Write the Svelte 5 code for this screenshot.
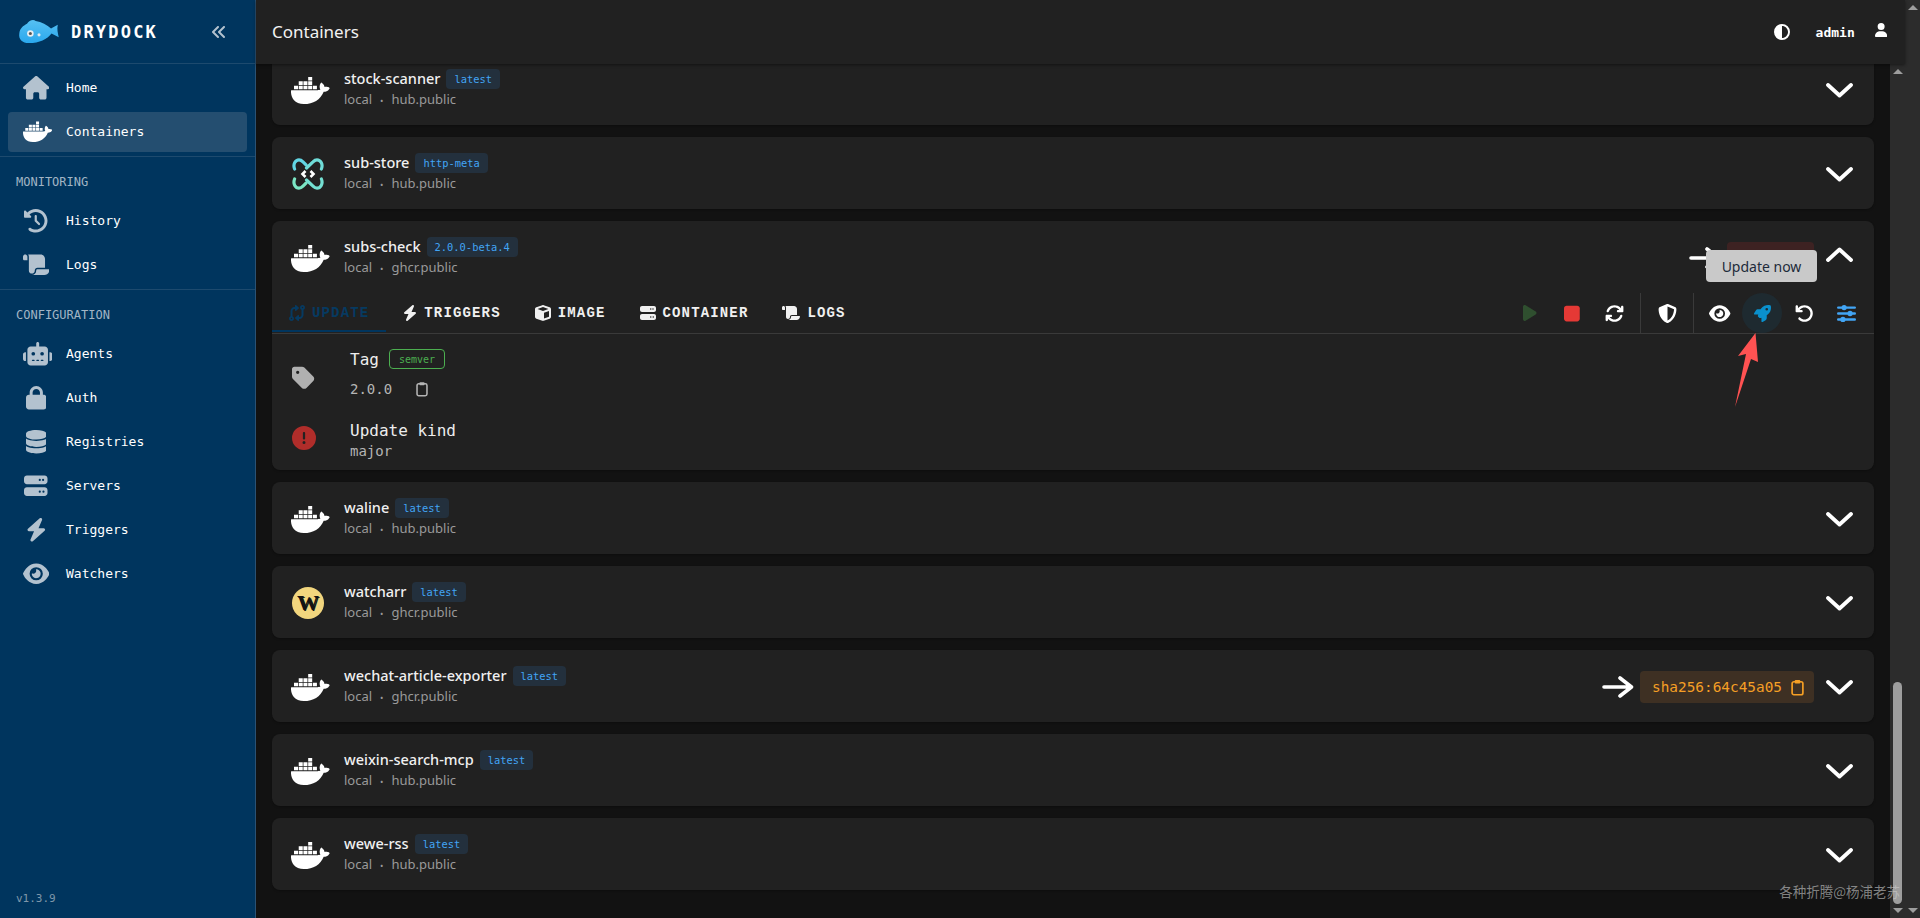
<script>
  const icons = {
    house: [576, 'M575.8 255.5c0 18-15 32.1-32 32.1h-32l.7 160.2c0 2.7-.2 5.4-.5 8.1V472c0 22.1-17.9 40-40 40H456c-1.1 0-2.2 0-3.3-.1c-1.4 .1-2.8 .1-4.2 .1H416 392c-22.1 0-40-17.9-40-40V448 384c0-17.7-14.3-32-32-32H256c-17.7 0-32 14.3-32 32v64 24c0 22.1-17.9 40-40 40H160 128.1c-1.5 0-3-.1-4.5-.2c-1.2 .1-2.4 .2-3.6 .2H104c-22.1 0-40-17.9-40-40V360c0-.9 0-1.9 .1-2.8V287.6H32c-18 0-32-14-32-32.1c0-9 3-17 10-24L266.4 8c7-7 15-8 22-8s15 2 21 7L564.8 231.5c8 7 12 15 11 24z'],
    docker: [640, 'M349.9 236.3h-66.1v-59.4h66.1v59.4zm0-204.3h-66.1v60.7h66.1V32zm78.2 144.8H362v59.4h66.1v-59.4zm-156.3-72.1h-66.1v60.1h66.1v-60.1zm78.1 0h-66.1v60.1h66.1v-60.1zm276.8 100c-14.4-9.7-47.6-13.2-73.1-8.4-3.3-24-16.7-44.9-41.1-63.7l-14-9.3-9.3 14c-18.4 27.8-23.4 73.6-3.7 103.8-8.7 4.7-25.8 11.1-48.4 10.7H2.4c-8.7 50.8 5.8 116.8 44 162.1 37.1 43.9 92.7 66.2 165.4 66.2 157.4 0 273.9-72.5 328.4-204.2 21.4.4 67.6.1 91.3-45.2 1.5-2.5 6.6-13.2 8.5-17.1l-13.3-8.9zm-511.1-27.9h-66v59.4h66.1v-59.4zm78.1 0h-66.1v59.4h66.1v-59.4zm78.1 0h-66.1v59.4h66.1v-59.4zm-78.1-72.1h-66.1v60.1h66.1v-60.1z'],
    history: [512, 'M75 75L41 41C25.9 25.9 0 36.6 0 57.9V168c0 13.3 10.7 24 24 24H134.1c21.4 0 32.1-25.9 17-41l-30.8-30.8C155 85.5 203 64 256 64c106 0 192 86 192 192s-86 192-192 192c-40.8 0-78.6-12.7-109.7-34.4c-14.5-10.1-34.4-6.6-44.6 7.9s-6.6 34.4 7.9 44.6C151.2 495 201.7 512 256 512c141.4 0 256-114.6 256-256S397.4 0 256 0C185.3 0 121.3 28.7 75 75zm181 53c-13.3 0-24 10.7-24 24V256c0 6.4 2.5 12.5 7 17l72 72c9.4 9.4 24.6 9.4 33.9 0s9.4-24.6 0-33.9l-65-65V152c0-13.3-10.7-24-24-24z'],
    scroll: [576, 'M0 80v48c0 17.7 14.3 32 32 32H48 96V80c0-26.5-21.5-48-48-48S0 53.5 0 80zM112 32c10 13.4 16 30 16 48V384c0 35.3 28.7 64 64 64s64-28.7 64-64v-5.3c0-32.4 26.3-58.7 58.7-58.7H480V128c0-53-43-96-96-96H112zM464 480c61.9 0 112-50.1 112-112c0-8.8-7.2-16-16-16H314.7c-14.7 0-26.7 11.9-26.7 26.7V384c0 53-43 96-96 96H368h96z'],
    robot: [640, 'M320 0c17.7 0 32 14.3 32 32V96H472c39.8 0 72 32.2 72 72V440c0 39.8-32.2 72-72 72H168c-39.8 0-72-32.2-72-72V168c0-39.8 32.2-72 72-72H288V32c0-17.7 14.3-32 32-32zM208 384c-8.8 0-16 7.2-16 16s7.2 16 16 16h32c8.8 0 16-7.2 16-16s-7.2-16-16-16H208zm96 0c-8.8 0-16 7.2-16 16s7.2 16 16 16h32c8.8 0 16-7.2 16-16s-7.2-16-16-16H304zm96 0c-8.8 0-16 7.2-16 16s7.2 16 16 16h32c8.8 0 16-7.2 16-16s-7.2-16-16-16H400zM264 256a40 40 0 1 0 -80 0 40 40 0 1 0 80 0zm152 40a40 40 0 1 0 0-80 40 40 0 1 0 0 80zM48 224H64V416H48c-26.5 0-48-21.5-48-48V272c0-26.5 21.5-48 48-48zm544 0c26.5 0 48 21.5 48 48v96c0 26.5-21.5 48-48 48H576V224h16z'],
    lock: [448, 'M144 144v48H304V144c0-44.2-35.8-80-80-80s-80 35.8-80 80zM80 192V144C80 64.5 144.5 0 224 0s144 64.5 144 144v48h16c35.3 0 64 28.7 64 64V448c0 35.3-28.7 64-64 64H64c-35.3 0-64-28.7-64-64V256c0-35.3 28.7-64 64-64H80z'],
    database: [448, 'M448 80v48c0 44.2-100.3 80-224 80S0 172.2 0 128V80C0 35.8 100.3 0 224 0S448 35.8 448 80zM393.2 214.7c20.8-7.4 39.9-16.9 54.8-28.6V288c0 44.2-100.3 80-224 80S0 332.2 0 288V186.1c14.9 11.8 34 21.2 54.8 28.6C99.7 230.7 159.5 240 224 240s124.3-9.3 169.2-25.3zM0 346.1c14.9 11.8 34 21.2 54.8 28.6C99.7 390.7 159.5 400 224 400s124.3-9.3 169.2-25.3c20.8-7.4 39.9-16.9 54.8-28.6V432c0 44.2-100.3 80-224 80S0 476.2 0 432V346.1z'],
    server: [512, 'M64 32C28.7 32 0 60.7 0 96v64c0 35.3 28.7 64 64 64H448c35.3 0 64-28.7 64-64V96c0-35.3-28.7-64-64-64H64zm280 72a24 24 0 1 1 0 48 24 24 0 1 1 0-48zm48 24a24 24 0 1 1 48 0 24 24 0 1 1 -48 0zM64 288c-35.3 0-64 28.7-64 64v64c0 35.3 28.7 64 64 64H448c35.3 0 64-28.7 64-64V352c0-35.3-28.7-64-64-64H64zm280 72a24 24 0 1 1 0 48 24 24 0 1 1 0-48zm56 24a24 24 0 1 1 48 0 24 24 0 1 1 -48 0z'],
    bolt: [448, 'M349.4 44.6c5.9-13.7 1.5-29.7-10.6-38.5s-28.6-8-39.9 1.8l-256 224c-10 8.8-13.6 22.9-8.9 35.3S50.7 288 64 288H175.5L98.6 467.4c-5.9 13.7-1.5 29.7 10.6 38.5s28.6 8 39.9-1.8l256-224c10-8.8 13.6-22.9 8.9-35.3s-16.6-20.7-30-20.7H272.5L349.4 44.6z'],
    eye: [576, 'M288 32c-80.8 0-145.5 36.8-192.6 80.6C48.6 156 17.3 208 2.5 243.7c-3.3 7.9-3.3 16.7 0 24.6C17.3 304 48.6 356 95.4 399.4C142.5 443.2 207.2 480 288 480s145.5-36.8 192.6-80.6c46.8-43.5 78.1-95.4 93-131.1c3.3-7.9 3.3-16.7 0-24.6c-14.9-35.7-46.2-87.7-93-131.1C433.5 68.8 368.8 32 288 32zM144 256a144 144 0 1 1 288 0 144 144 0 1 1 -288 0zm144-64c0 35.3-28.7 64-64 64c-7.1 0-13.9-1.2-20.3-3.3c-5.5-1.8-11.9 1.6-11.7 7.4c.3 6.9 1.3 13.8 3.2 20.7c13.7 51.2 66.4 81.6 117.6 67.9s81.6-66.4 67.9-117.6c-11.1-41.5-47.8-69.4-88.6-71.1c-5.8-.2-9.2 6.1-7.4 11.7c2.1 6.4 3.3 13.2 3.3 20.3z'],
    anglesLeft: [448, 'M41.4 233.4c-12.5 12.5-12.5 32.8 0 45.3l160 160c12.5 12.5 32.8 12.5 45.3 0s12.5-32.8 0-45.3L109.3 256 246.6 118.6c12.5-12.5 12.5-32.8 0-45.3s-32.8-12.5-45.3 0l-160 160zm352-160l-160 160c-12.5 12.5-12.5 32.8 0 45.3l160 160c12.5 12.5 32.8 12.5 45.3 0s12.5-32.8 0-45.3L301.3 256 438.6 118.6c12.5-12.5 12.5-32.8 0-45.3s-32.8-12.5-45.3 0z'],
    contrast: [512, 'M448 256c0-106-86-192-192-192V448c106 0 192-86 192-192zM0 256a256 256 0 1 1 512 0A256 256 0 1 1 0 256z'],
    user: [448, 'M224 256A128 128 0 1 0 224 0a128 128 0 1 0 0 256zm-45.7 48C79.8 304 0 383.8 0 482.3C0 498.7 13.3 512 29.7 512H418.3c16.4 0 29.7-13.3 29.7-29.7C448 383.8 368.2 304 269.7 304H178.3z'],
    tag: [448, 'M0 80V229.5c0 17 6.7 33.3 18.7 45.3l176 176c25 25 65.5 25 90.5 0L418.7 317.3c25-25 25-65.5 0-90.5l-176-176c-12-12-28.3-18.7-45.3-18.7H48C21.5 32 0 53.5 0 80zm112 32a32 32 0 1 1 0 64 32 32 0 1 1 0-64z'],
    alert: [512, 'M256 512A256 256 0 1 0 256 0a256 256 0 1 0 0 512zm0-384c13.3 0 24 10.7 24 24V264c0 13.3-10.7 24-24 24s-24-10.7-24-24V152c0-13.3 10.7-24 24-24zM224 352a32 32 0 1 1 64 0 32 32 0 1 1 -64 0z'],
    cube: [512, 'M234.5 5.7c13.9-5 29.1-5 43.1 0l192 68.6C495 83.4 512 107.5 512 134.6V377.4c0 27-17 51.2-42.5 60.3l-192 68.6c-13.9 5-29.1 5-43.1 0l-192-68.6C17 428.6 0 404.5 0 377.4V134.6c0-27 17-51.2 42.5-60.3l192-68.6zM256 66L82.3 128 256 190l173.7-62L256 66zm32 368.6l160-57.1v-188L288 246.6v188z'],
    compare: [512, 'M320 488c0 9.5-5.6 18.1-14.2 21.9s-18.8 2.3-25.8-4.1l-80-72c-5.1-4.6-7.9-11-7.9-17.8s2.9-13.3 7.9-17.8l80-72c7-6.3 17.2-7.9 25.8-4.1s14.2 12.4 14.2 21.9v40h16c35.3 0 64-28.7 64-64V153.3C371.7 141 352 112.8 352 80c0-44.2 35.8-80 80-80s80 35.8 80 80c0 32.8-19.7 61-48 73.3V320c0 70.7-57.3 128-128 128H320v40zM456 80a24 24 0 1 0 -48 0 24 24 0 1 0 48 0zM192 24c0-9.5 5.6-18.1 14.2-21.9s18.8-2.3 25.8 4.1l80 72c5.1 4.6 7.9 11 7.9 17.8s-2.9 13.3-7.9 17.8l-80 72c-7 6.3-17.2 7.9-25.8 4.1s-14.2-12.4-14.2-21.9V128H176c-35.3 0-64 28.7-64 64V358.7c28.3 12.3 48 40.5 48 73.3c0 44.2-35.8 80-80 80s-80-35.8-80-80c0-32.8 19.7-61 48-73.3V192c0-70.7 57.3-128 128-128h16V24zM56 432a24 24 0 1 0 48 0 24 24 0 1 0 -48 0z'],
    play: [384, 'M73 39c-14.8-9.1-33.4-9.4-48.5-.9S0 62.6 0 80V432c0 17.4 9.4 33.4 24.5 41.9s33.7 8.1 48.5-.9L361 297c14.3-8.7 23-24.2 23-41s-8.7-32.2-23-41L73 39z'],
    stop: [384, 'M0 128C0 92.7 28.7 64 64 64H320c35.3 0 64 28.7 64 64V384c0 35.3-28.7 64-64 64H64c-35.3 0-64-28.7-64-64V128z'],
    rotate: [512, 'M105.1 202.6c7.7-21.8 20.2-42.3 37.8-59.8c62.5-62.5 163.8-62.5 226.3 0L386.3 160H352c-17.7 0-32 14.3-32 32s14.3 32 32 32H463.5c0 0 0 0 0 0h.4c17.7 0 32-14.3 32-32V80c0-17.7-14.3-32-32-32s-32 14.3-32 32v35.2L414.4 97.6c-87.5-87.5-229.3-87.5-316.8 0C73.2 122 55.6 150.7 44.8 181.4c-5.9 16.7 2.9 34.9 19.5 40.8s34.9-2.9 40.8-19.5zM39 289.3c-5 1.5-9.8 4.2-13.7 8.2c-4 4-6.7 8.8-8.1 14c-.3 1.2-.6 2.5-.8 3.8c-.3 1.7-.4 3.4-.4 5.1V432c0 17.7 14.3 32 32 32s32-14.3 32-32V396.9l17.6 17.5 0 0c87.5 87.4 229.3 87.4 316.7 0c24.4-24.4 42.1-53.1 52.9-83.7c5.9-16.7-2.9-34.9-19.5-40.8s-34.9 2.9-40.8 19.5c-7.7 21.8-20.2 42.3-37.8 59.8c-62.5 62.5-163.8 62.5-226.3 0l-.1-.1L125.6 352H160c17.7 0 32-14.3 32-32s-14.3-32-32-32H48.4c-1.6 0-3.2 .1-4.8 .3s-3.1 .5-4.6 1z'],
    shield: [512, 'M256 0c4.6 0 9.2 1 13.4 2.9L457.7 82.8c22 9.3 38.4 31 38.3 57.2c-.5 99.2-41.3 280.7-213.6 363.2c-16.7 8-36.1 8-52.8 0C57.3 420.7 16.5 239.2 16 140c-.1-26.2 16.3-47.9 38.3-57.2L242.7 2.9C246.8 1 251.4 0 256 0zm0 66.8V444.8C394 378 431.1 230.1 432 141.4L256 66.8l0 0z'],
    rocket: [512, 'M156.6 384.9L125.7 354c-8.5-8.5-11.5-20.8-7.7-32.2c3-8.9 7-20.5 11.8-33.8L24 288c-8.6 0-16.6-4.6-20.9-12.1s-4.2-16.7 .2-24.1l52.5-88.5c13-21.9 36.5-35.3 61.9-35.3l82.3 0c2.4-4 4.8-7.7 7.2-11.3C289.1-4.1 411.1-8.1 483.9 5.3c11.6 2.1 20.6 11.2 22.8 22.8c13.4 72.9 9.3 194.8-111.4 276.7c-3.5 2.4-7.3 4.8-11.3 7.2v82.3c0 25.4-13.4 49-35.3 61.9l-88.5 52.5c-7.4 4.4-16.6 4.5-24.1 .2s-12.1-12.2-12.1-20.9V380.8c-14.1 4.9-26.4 8.9-35.7 11.9c-11.2 3.6-23.4 .5-31.8-7.8zM384 168a40 40 0 1 0 0-80 40 40 0 1 0 0 80z'],
    undo: [512, 'M125.7 160H176c17.7 0 32 14.3 32 32s-14.3 32-32 32H48c-17.7 0-32-14.3-32-32V64c0-17.7 14.3-32 32-32s32 14.3 32 32v51.2L97.6 97.6c87.5-87.5 229.3-87.5 316.8 0s87.5 229.3 0 316.8s-229.3 87.5-316.8 0c-12.5-12.5-12.5-32.8 0-45.3s32.8-12.5 45.3 0c62.5 62.5 163.8 62.5 226.3 0s62.5-163.8 0-226.3s-163.8-62.5-226.3 0L125.7 160z'],
    sliders: [512, 'M32 64H480a32 32 0 0 1 0 64H32a32 32 0 0 1 0-64zM192 24a72 72 0 1 1 0 144 72 72 0 1 1 0-144zM32 224H480a32 32 0 0 1 0 64H32a32 32 0 0 1 0-64zM352 184a72 72 0 1 1 0 144 72 72 0 1 1 0-144zM32 384H480a32 32 0 0 1 0 64H32a32 32 0 0 1 0-64zM160 344a72 72 0 1 1 0 144 72 72 0 1 1 0-144z']
  };

  const nav = [
    { items: [['house', 'Home'], ['docker', 'Containers', true]] },
    { title: 'MONITORING', items: [['history', 'History'], ['scroll', 'Logs']] },
    {
      title: 'CONFIGURATION',
      items: [['robot', 'Agents'], ['lock', 'Auth'], ['database', 'Registries'], ['server', 'Servers'], ['bolt', 'Triggers'], ['eye', 'Watchers']]
    }
  ];

  const cards = [
    { name: 'stock-scanner', tag: 'latest', reg: 'hub.public' },
    { name: 'sub-store', tag: 'http-meta', reg: 'hub.public', logo: 'store' },
    { name: 'subs-check', tag: '2.0.0-beta.4', reg: 'ghcr.public', open: true, next: '2.0.0', kind: 'danger' },
    { name: 'waline', tag: 'latest', reg: 'hub.public' },
    { name: 'watcharr', tag: 'latest', reg: 'ghcr.public', logo: 'watcharr' },
    { name: 'wechat-article-exporter', tag: 'latest', reg: 'ghcr.public', next: 'sha256:64c45a05', kind: 'warn' },
    { name: 'weixin-search-mcp', tag: 'latest', reg: 'hub.public' },
    { name: 'wewe-rss', tag: 'latest', reg: 'hub.public' }
  ];

  const tabs = [['compare', 'UPDATE'], ['bolt', 'TRIGGERS'], ['cube', 'IMAGE'], ['server', 'CONTAINER'], ['scroll', 'LOGS']];
</script>

{#snippet icon(name, cls = '')}
  <svg class="ic {cls}" viewBox="0 0 {icons[name][0]} 512" fill="currentColor" aria-hidden="true"><path d={icons[name][1]} /></svg>
{/snippet}

{#snippet clip(cls = '')}
  <svg class="clip {cls}" viewBox="0 0 14 18" aria-hidden="true">
    <rect x="1.2" y="2.8" width="11.6" height="14" rx="2" fill="none" stroke="currentColor" stroke-width="1.8" />
    <rect x="4" y="1" width="6" height="3.6" rx="1" fill="currentColor" />
  </svg>
{/snippet}

<div class="app">
  <aside class="sidebar">
    <div class="brand">
      <svg class="fish" viewBox="0 0 44 26" aria-hidden="true">
        <defs>
          <linearGradient id="fishbody" x1="0" y1="0" x2="0" y2="1">
            <stop offset="0" stop-color="#56c0f2" />
            <stop offset="1" stop-color="#2aa8ee" />
          </linearGradient>
        </defs>
        <path d="M9 5 C11 1 16 0 18 2 C24 3 30 6 34 10 L41 6 C40 11 41 14 42 19 L34.5 15 C30 21 22 25 11 25 C4 25 0 21 1 15 C1.5 10 5 7 9 5z" fill="url(#fishbody)" />
        <circle cx="12.5" cy="15" r="3.4" fill="#e8eef2" />
        <circle cx="12.5" cy="15" r="1.6" fill="#555" />
        <circle cx="21.5" cy="16.5" r="1.6" fill="#dfeaf2" />
      </svg>
      <span class="brand-name">DRYDOCK</span>
      <span class="collapse">{@render icon('anglesLeft')}</span>
    </div>

    {#each nav as group}
      <nav class="group">
        {#if group.title}<div class="group-title">{group.title}</div>{/if}
        {#each group.items as [ic, label, active]}
          <div class="nav-item" class:active>
            <span class="nav-ic">{@render icon(ic)}</span>
            <span class="nav-label">{label}</span>
          </div>
        {/each}
      </nav>
    {/each}

    <div class="version">v1.3.9</div>
  </aside>

  <div class="content">
    <header class="topbar">
      <div class="page-title">Containers</div>
      <div class="top-right">
        {@render icon('contrast', 'contrast')}
        <span class="admin">admin</span>
        {@render icon('user', 'user')}
      </div>
    </header>

    <div class="below">
      <main class="scroller">
        <div class="list">
          {#each cards as c}
            <section class="card">
              <div class="card-head">
                <div class="logo">
                  {#if c.logo === 'store'}
                    <svg class="store" viewBox="0 0 32 32" aria-hidden="true">
                      <g fill="none" stroke-width="3.2" stroke-linecap="round">
                        <path d="M2.6 11 C0.6 6 3.6 1.8 7 1.8 C9 1.8 10 2.8 11 3.8 L14 6.8" stroke="#62d6e4" />
                        <path d="M29.4 11 C31.4 6 28.4 1.8 25 1.8 C23 1.8 22 2.8 21 3.8 L14.5 10" stroke="#6fdcd8" />
                        <path d="M2.6 21 C0.6 26 3.6 30.2 7 30.2 C9 30.2 10 29.2 11 28.2 L14 25.2" stroke="#7be6c4" />
                        <path d="M29.4 21 C31.4 26 28.4 30.2 25 30.2 C23 30.2 22 29.2 21 28.2 L14.5 22" stroke="#74e0d2" />
                      </g>
                      <path d="M13.5 13 L10.5 16 L13.5 19 M18.5 13 L21.5 16 L18.5 19" fill="none" stroke="#fff" stroke-width="2.6" />
                    </svg>
                  {:else if c.logo === 'watcharr'}
                    <div class="watcharr">W</div>
                  {:else}
                    {@render icon('docker', 'docker')}
                  {/if}
                </div>
                <div class="meta">
                  <div class="name-row">
                    <span class="name">{c.name}</span>
                    <span class="tag">{c.tag}</span>
                  </div>
                  <div class="sub">local<span class="dot">•</span>{c.reg}</div>
                </div>
                <div class="head-right">
                  {#if c.next}
                    <svg class="arrow" viewBox="0 0 32 22" aria-hidden="true">
                      <path d="M2 11 H29 M18 2 L29.5 11 L18 20" fill="none" stroke="#fff" stroke-width="3.6" stroke-linecap="round" stroke-linejoin="round" />
                    </svg>
                    <span class="next {c.kind}">{c.next}{@render clip()}</span>
                  {/if}
                  <svg class="chev" class:up={c.open} viewBox="0 0 27 15" aria-hidden="true">
                    <path d={c.open ? 'M2 13 L13.5 2.5 L25 13' : 'M2 2 L13.5 12.5 L25 2'} fill="none" stroke="#fff" stroke-width="3.8" stroke-linecap="round" stroke-linejoin="round" />
                  </svg>
                </div>
              </div>

              {#if c.open}
                <div class="toolbar">
                  <div class="tabs">
                    {#each tabs as [ic, label], i}
                      <div class="tab" class:current={i === 0}>{@render icon(ic)}<span>{label}</span></div>
                    {/each}
                  </div>
                  <div class="actions">
                    <span class="act play">{@render icon('play')}</span>
                    <span class="act stop">{@render icon('stop')}</span>
                    <span class="act">{@render icon('rotate')}</span>
                    <span class="sep"></span>
                    <span class="act">{@render icon('shield')}</span>
                    <span class="sep"></span>
                    <span class="act">{@render icon('eye')}</span>
                    <span class="act rocket">{@render icon('rocket')}</span>
                    <span class="act">{@render icon('undo')}</span>
                    <span class="act sliders">{@render icon('sliders')}</span>
                  </div>
                </div>
                <div class="detail">
                  <div class="detail-row">
                    <span class="detail-ic tagic">{@render icon('tag')}</span>
                    <div>
                      <div class="detail-title">Tag<span class="semver">semver</span></div>
                      <div class="detail-value val-gap">2.0.0{@render clip('small')}</div>
                    </div>
                  </div>
                  <div class="detail-row second">
                    <span class="detail-ic alert">{@render icon('alert')}</span>
                    <div>
                      <div class="detail-title">Update kind</div>
                      <div class="detail-value">major</div>
                    </div>
                  </div>
                </div>
                <div class="tooltip">Update now</div>
              {/if}
            </section>
          {/each}
        </div>
      </main>
      <div class="vbar inner">
        <i class="tri up"></i>
        <div class="track"><div class="thumb"></div></div>
        <i class="tri down"></i>
      </div>
    </div>
  </div>

  <div class="vbar outer">
    <i class="tri up"></i>
    <i class="tri down"></i>
  </div>

  <svg class="pointer" viewBox="0 0 30 80" aria-hidden="true">
    <path d="M23.5 1 L26 30 L19 27 L3 75 L14 22 L6 24z" fill="#ff5252" />
  </svg>
  <div class="watermark">各种折腾@杨浦老苏</div>
</div>

<style>
  :global(body) {
    margin: 0;
    background: #121212;
  }

  .app {
    position: relative;
    display: flex;
    height: 918px;
    overflow: hidden;
    font-family: 'DejaVu Sans Mono', 'Liberation Mono', monospace;
    color: #fff;
  }

  .ic {
    display: block;
    height: 1em;
    flex-shrink: 0;
  }

  /* sidebar */
  .sidebar {
    width: 255px;
    flex-shrink: 0;
    display: flex;
    flex-direction: column;
    background: #00355e;
    border-right: 1px solid #2b5274;
  }

  .brand {
    height: 63px;
    display: flex;
    align-items: center;
    padding-left: 18px;
    border-bottom: 1px solid #1d4a6e;
  }

  .fish {
    width: 43px;
    height: 25px;
    margin-right: 10px;
  }

  .brand-name {
    font-size: 17px;
    font-weight: 700;
    letter-spacing: 2.2px;
  }

  .collapse {
    margin-left: 53px;
    font-size: 16px;
    color: #b3c2cf;
  }

  .group {
    display: flex;
    flex-direction: column;
    gap: 4px;
    padding: 4px 8px;
    border-bottom: 1px solid #1d4a6e;
  }

  .group:nth-of-type(3) {
    border-bottom: none;
  }

  .group-title {
    height: 36px;
    box-sizing: border-box;
    padding: 5px 0 0 8px;
    display: flex;
    align-items: center;
    font-size: 12px;
    color: #a2b5c5;
  }

  .nav-item {
    height: 40px;
    display: flex;
    align-items: center;
    gap: 17px;
    padding-left: 15px;
    border-radius: 4px;
    font-size: 13px;
  }

  .nav-label {
    margin-top: -2px;
  }

  .nav-item.active {
    background: #244e70;
  }

  .nav-ic {
    width: 26px;
    display: flex;
    justify-content: safe center;
    font-size: 23.5px;
    color: #b3c2cf;
  }

  .nav-item.active .nav-ic {
    color: #fff;
  }

  .version {
    margin-top: auto;
    padding: 0 0 13px 16px;
    font-size: 11px;
    color: #7f97aa;
  }

  /* main column */
  .content {
    flex: 1;
    min-width: 0;
    display: flex;
    flex-direction: column;
  }

  .topbar {
    position: relative;
    z-index: 2;
    height: 64px;
    flex-shrink: 0;
    display: flex;
    align-items: center;
    justify-content: space-between;
    padding: 0 16px;
    background: #212121;
    box-shadow: 0 1px 3px rgba(0, 0, 0, 0.45);
  }

  .page-title {
    font-family: 'Noto Sans', sans-serif;
    font-size: 17px;
    margin-top: -2px;
    color: #f2f2f2;
  }

  .top-right {
    display: flex;
    align-items: center;
  }

  .contrast {
    font-size: 16px;
    margin-right: 26px;
  }

  .admin {
    font-size: 13px;
    font-weight: 700;
    margin-right: 20px;
  }

  .user {
    font-size: 14px;
    margin-top: -4px;
    margin-right: 2px;
  }

  .below {
    flex: 1;
    min-height: 0;
    display: flex;
  }

  .scroller {
    flex: 1;
    min-width: 0;
    overflow: hidden;
    padding: 0 16px;
    background: #121212;
  }

  .list {
    display: flex;
    flex-direction: column;
    gap: 12px;
    margin-top: -11px;
  }

  /* cards */
  .card {
    position: relative;
    border-radius: 8px;
    background: #212121;
    box-shadow: 0 1px 2px rgba(0, 0, 0, 0.25);
  }

  .card-head {
    height: 72px;
    box-sizing: border-box;
    display: flex;
    align-items: center;
    padding: 2px 21px 0 20px;
  }

  .logo {
    width: 32px;
    margin-right: 20px;
    display: flex;
    justify-content: safe center;
  }

  .docker {
    font-size: 31px;
    margin-left: -1px;
    color: #fff;
  }

  .store {
    width: 32px;
    height: 32px;
  }

  .watcharr {
    width: 32px;
    height: 32px;
    border-radius: 50%;
    background: #f2d67e;
    display: flex;
    align-items: center;
    justify-content: center;
    font-family: 'Liberation Serif', serif;
    font-size: 22px;
    font-weight: 700;
    color: #141414;
    text-shadow: 1px 1px 0 #141414;
  }

  .meta {
    font-family: 'Noto Sans', sans-serif;
  }

  .name-row {
    display: flex;
    align-items: center;
    gap: 6px;
    height: 20px;
  }

  .name {
    margin-top: -2px;
    font-size: 14.5px;
    font-weight: 500;
    color: #f0f0f0;
  }

  .tag {
    height: 20px;
    display: flex;
    align-items: center;
    padding: 0 8px;
    border-radius: 4px;
    background: #23303d;
    font-family: 'DejaVu Sans Mono', monospace;
    font-size: 10.4px;
    color: #42a5f5;
  }

  .sub {
    font-size: 13px;
    line-height: 20px;
    color: #9a9a9a;
  }

  .dot {
    margin: 0 8px;
    font-size: 9px;
  }

  .head-right {
    margin-left: auto;
    display: flex;
    align-items: center;
  }

  .arrow {
    width: 32px;
    height: 22px;
    margin-right: 6px;
  }

  .next {
    height: 32px;
    display: flex;
    align-items: center;
    gap: 9px;
    padding: 0 10px 0 12px;
    border-radius: 4px;
    font-size: 14.4px;
  }

  .next.warn {
    background: #3e3023;
    color: #f59f25;
  }

  .next.danger {
    background: #3d2222;
    color: #e53935;
  }

  .clip {
    width: 13px;
    height: 17px;
  }

  .clip.small {
    color: #b5b5b5;
    margin-left: 24px;
    width: 12px;
    height: 16px;
  }

  .chev {
    width: 27px;
    height: 15px;
    margin-left: 12px;
  }

  .chev.up {
    margin-top: -8px;
  }

  .toolbar {
    display: flex;
    justify-content: space-between;
    height: 40px;
    padding-right: 7px;
    border-bottom: 1px solid #3a3a3a;
  }

  .tabs {
    display: flex;
  }

  .tab {
    position: relative;
    display: flex;
    align-items: center;
    gap: 7px;
    padding: 0 17px;
    font-family: 'Liberation Mono', monospace;
    font-size: 14px;
    font-weight: 700;
    letter-spacing: 1.15px;
    color: #f0f0f0;
  }

  .tab .ic {
    font-size: 16px;
  }

  .tab.current {
    color: #063a61;
  }

  .tab.current::after {
    content: '';
    position: absolute;
    left: 0;
    right: 0;
    bottom: 1px;
    height: 2px;
    background: #00355e;
  }

  .actions {
    display: flex;
    align-items: stretch;
  }

  .act {
    width: 42px;
    display: flex;
    align-items: center;
    justify-content: center;
    font-size: 19px;
    color: #fff;
  }

  .act.play {
    color: #2f4f2f;
    font-size: 18px;
  }

  .act.stop {
    color: #e53935;
    font-size: 21px;
  }

  .act.rocket {
    color: #0a90cc;
    position: relative;
    font-size: 17px;
  }

  .act.rocket::before {
    content: '';
    position: absolute;
    width: 40px;
    height: 40px;
    border-radius: 50%;
    background: rgba(2, 136, 199, 0.09);
  }

  .act.rocket .ic {
    position: relative;
  }

  .act.sliders {
    color: #42a5f5;
  }

  .sep {
    width: 1px;
    margin: 0 5px;
    background: #3a3a3a;
  }

  .detail {
    padding: 12px 0 11px;
  }

  .detail-row {
    display: flex;
    align-items: center;
  }

  .detail-row.second {
    margin-top: 14px;
  }

  .detail-ic {
    width: 58px;
    margin-left: 20px;
    display: block;
  }

  .tagic {
    font-size: 26px;
    margin-top: 7px;
    color: #b0b0b0;
  }

  .alert {
    font-size: 24px;
    color: #b02d2a;
  }

  .detail-title {
    display: flex;
    align-items: center;
    gap: 10px;
    height: 26px;
    font-size: 16px;
    color: #ededed;
  }

  .semver {
    height: 18px;
    display: flex;
    align-items: center;
    padding: 0 9px;
    border: 1px solid #4caf50;
    border-radius: 4px;
    font-size: 10px;
    color: #4caf50;
  }

  .detail-value {
    font-size: 14px;
    line-height: 16px;
    color: #b5b5b5;
  }

  .val-gap {
    display: flex;
    align-items: center;
    height: 28px;
    margin-top: 3px;
  }

  .tooltip {
    position: absolute;
    left: 1434px;
    top: 29px;
    width: 111px;
    height: 32px;
    display: flex;
    align-items: center;
    justify-content: center;
    border-radius: 4px;
    background: #c9c9c9;
    font-family: 'Noto Sans', sans-serif;
    font-size: 14px;
    color: #1d2b3a;
  }

  /* scrollbars */
  .vbar {
    width: 15px;
    flex-shrink: 0;
    background: #2c2c2c;
    display: flex;
    flex-direction: column;
    align-items: center;
    justify-content: space-between;
    padding: 5px 0;
    box-sizing: border-box;
  }

  .vbar.outer {
    height: 918px;
  }

  .track {
    flex: 1;
    width: 100%;
    display: flex;
    flex-direction: column;
    justify-content: flex-end;
    align-items: center;
    padding: 0 0 4px;
    box-sizing: border-box;
  }

  .thumb {
    width: 9px;
    height: 222px;
    border-radius: 5px;
    background: #9e9e9e;
  }

  .tri {
    width: 0;
    height: 0;
    border-left: 5px solid transparent;
    border-right: 5px solid transparent;
  }

  .tri.up {
    border-bottom: 5px solid #9e9e9e;
  }

  .tri.down {
    border-top: 5px solid #9e9e9e;
  }

  /* screenshot annotations */
  .pointer {
    position: absolute;
    left: 1732px;
    top: 332px;
    width: 30px;
    height: 80px;
  }

  .watermark {
    position: absolute;
    right: 20px;
    top: 881px;
    font-family: 'Noto Sans CJK SC', sans-serif;
    font-size: 13.5px;
    line-height: 20px;
    color: rgba(205, 205, 205, 0.6);
  }
</style>
